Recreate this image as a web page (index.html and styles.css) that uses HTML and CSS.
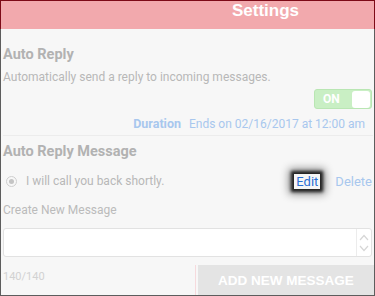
FILE: index.html
```html
<!DOCTYPE html>
<html>
<head>
<meta charset="utf-8">
<link rel="stylesheet" href="styles.css">
</head>
<body>
<div class="frame">
  <header class="header"><h1 class="title">Settings</h1></header>
  <main class="content">
    <section class="auto">
      <h2 class="heading">Auto Reply</h2>
      <p class="desc">Automatically send a reply to incoming messages.</p>
      <div class="toggle-row">
        <div class="toggle"><span class="toggle-label">ON</span><span class="knob"></span></div>
      </div>
      <div class="duration"><span class="dur-label">Duration</span><span class="dur-value">Ends on 02/16/2017 at 12:00 am</span></div>
    </section>
    <section class="messages">
      <h2 class="heading">Auto Reply Message</h2>
      <div class="msg-row">
        <span class="radio"><span class="dot"></span></span>
        <span class="msg-text">I will call you back shortly.</span>
        <span class="edit">Edit</span>
        <span class="delete">Delete</span>
      </div>
      <div class="create-label">Create New Message</div>
      <div class="textbox">
        <div class="field"></div>
        <div class="spin">
          <svg width="12" height="24" viewBox="0 0 12 24"><path d="M2 9 L6 4.5 L10 9" fill="none" stroke="#d6d6d6" stroke-width="1.2"/><path d="M2 15 L6 19.5 L10 15" fill="none" stroke="#d6d6d6" stroke-width="1.2"/></svg>
        </div>
      </div>
      <div class="bottom">
        <span class="count">140/140</span>
        <div class="btn-wrap"><button class="add-btn">ADD NEW MESSAGE</button></div>
      </div>
    </section>
  </main>
</div>
</body>
</html>
```

FILE: styles.css
```css
* { box-sizing: border-box; }
html, body { margin: 0; padding: 0; }
body { width: 375px; height: 296px; overflow: hidden; background: #f7f7f7; font-family: Roboto, "Liberation Sans", Arial, sans-serif; }
.frame { width: 375px; height: 296px; display: flex; flex-direction: column; overflow: hidden; }
.header { flex: 0 0 29px; height: 29px; background: #f2a9ad; border: 1px solid #7d0a17; border-bottom: none; }
.title { margin: 0; font-family: "Liberation Sans", Arial, sans-serif; font-weight: bold; font-size: 17px; color: #fff; line-height: 19px; padding-left: 231px; }
.content { flex: 1 1 auto; min-height: 0; overflow: hidden; border: 1px solid #5d5d5d; border-top: none; padding: 0 0 0 2px; display: flex; flex-direction: column; }
.heading { margin: 0; font-size: 14.5px; font-weight: bold; color: #b2b2b2; line-height: 18px; }
.auto { padding-top: 17px; padding-bottom: 3px; border-bottom: 1px solid #ececec; margin-right: 1px; flex-shrink: 0; }
.desc { margin: 6px 0 0; font-size: 12px; color: #b8b8b8; line-height: 15px; }
.toggle-row { display: flex; justify-content: flex-end; margin-top: 4px; padding-right: 1px; }
.toggle { width: 58px; height: 20px; background: #c9efc4; border: 1px solid #b9e6b3; border-radius: 3px; display: flex; align-items: center; justify-content: space-between; padding: 0 1px 0 8px; }
.toggle-label { color: #fff; font-weight: bold; font-size: 12px; }
.knob { width: 18px; height: 17px; background: #fff; border-radius: 3px; }
.duration { display: flex; justify-content: flex-end; gap: 8px; margin-top: 7px; padding-right: 8px; font-size: 12px; line-height: 16px; }
.dur-label { color: #a8c7ee; font-weight: bold; font-size: 12.5px; }
.dur-value { color: #a8c7ee; }
.messages { padding-top: 7px; display: flex; flex-direction: column; flex-shrink: 0; }
.msg-row { display: flex; align-items: center; margin-top: 10px; height: 20px; }
.radio { width: 11px; height: 11px; border: 1px solid #cfcfcf; border-radius: 50%; display: flex; align-items: center; justify-content: center; margin-left: 3px; }
.dot { width: 5px; height: 5px; background: #c4c4c4; border-radius: 50%; }
.msg-text { margin-left: 9px; font-size: 12px; color: #b8b8b8; flex: 1; }
.edit { font-size: 13px; color: #2a6fd4; background: #f6f6f6; padding: 1px 2px; line-height: 13px; box-shadow: 0 0 3px 3px rgba(20,20,20,0.9), 0 0 8px 5px rgba(0,0,0,0.45); }
.delete { font-size: 13px; color: #a8c7ee; margin-left: 15px; margin-right: 2px; }
.create-label { margin-top: 11px; font-size: 12px; color: #bbb; line-height: 16px; }
.textbox { margin-top: 10px; margin-right: 2px; height: 29px; flex-shrink: 0; background: #fff; border: 1px solid #e2e2e2; border-radius: 3px; display: flex; }
.field { flex: 1; }
.spin { width: 15px; border-left: 1px solid #ececec; display: flex; align-items: center; justify-content: center; }
.bottom { display: flex; justify-content: space-between; align-items: flex-start; margin-top: 8px; }
.count { font-size: 11px; color: #d2d2d2; margin-top: 5px; }
.btn-wrap { border-left: 1px solid #f6dadd; padding-left: 2px; height: 30px; }
.add-btn { width: 176px; height: 30px; border: none; background: #e4e4e4; color: #fff; font-family: "Liberation Sans", Arial, sans-serif; font-weight: bold; font-size: 13.5px; padding: 0; }
```
